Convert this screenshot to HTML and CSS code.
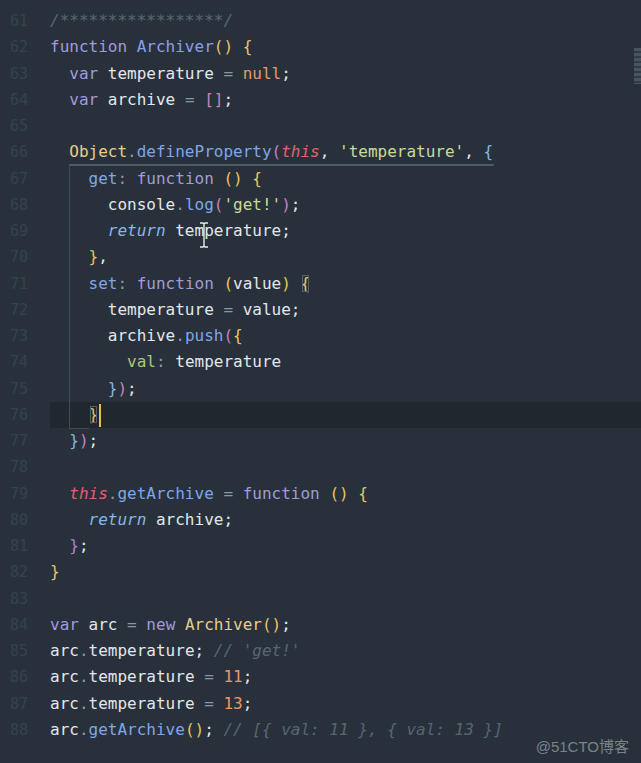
FILE: index.html
```html
<!DOCTYPE html>
<html>
<head>
<meta charset="utf-8">
<link rel="stylesheet" href="styles.css">
</head>
<body>
<div class="editor">
  <div class="row"><span class="ln">61</span><span class="code"><span class="cm">/*****************/</span></span></div>
  <div class="row"><span class="ln">62</span><span class="code"><span class="kw">function</span> <span class="fn">Archiver</span><span class="y">()</span> <span class="y">{</span></span></div>
  <div class="row"><span class="ln">63</span><span class="code">  <span class="kw">var</span> temperature <span class="op">=</span> <span class="nu">null</span>;</span></div>
  <div class="row"><span class="ln">64</span><span class="code">  <span class="kw">var</span> archive <span class="op">=</span> <span class="pk">[]</span>;</span></div>
  <div class="row"><span class="ln">65</span><span class="code"></span></div>
  <div class="row"><span class="ln">66</span><span class="code">  <span class="ob">Object</span><span class="op">.</span><span class="me">defineProperty</span><span class="pk">(</span><span class="th">this</span>, <span class="st">'temperature'</span>, <span class="lb">{</span></span></div>
  <div class="row"><span class="ln">67</span><span class="code">    <span class="me">get</span><span class="op">:</span> <span class="kw">function</span> <span class="y">()</span> <span class="y">{</span></span></div>
  <div class="row"><span class="ln">68</span><span class="code">      console<span class="op">.</span><span class="me">log</span><span class="pk">(</span><span class="st">'get!'</span><span class="pk">)</span>;</span></div>
  <div class="row"><span class="ln">69</span><span class="code">      <span class="rt">return</span> temperature;</span></div>
  <div class="row"><span class="ln">70</span><span class="code">    <span class="y">}</span>,</span></div>
  <div class="row"><span class="ln">71</span><span class="code">    <span class="me">set</span><span class="op">:</span> <span class="kw">function</span> <span class="y">(</span>value<span class="y">)</span> <span class="y boxed">{</span></span></div>
  <div class="row"><span class="ln">72</span><span class="code">      temperature <span class="op">=</span> value;</span></div>
  <div class="row"><span class="ln">73</span><span class="code">      archive<span class="op">.</span><span class="me">push</span><span class="pk">(</span><span class="y">{</span></span></div>
  <div class="row"><span class="ln">74</span><span class="code">        <span class="gr">val</span><span class="op">:</span> temperature</span></div>
  <div class="row"><span class="ln">75</span><span class="code">      <span class="lb">}</span><span class="pk">)</span>;</span></div>
  <div class="row cur"><span class="ln">76</span><span class="code">    <span class="y boxed">}</span><span class="caret"></span></span></div>
  <div class="row"><span class="ln">77</span><span class="code">  <span class="lb">}</span><span class="pk">)</span>;</span></div>
  <div class="row"><span class="ln">78</span><span class="code"></span></div>
  <div class="row"><span class="ln">79</span><span class="code">  <span class="th">this</span><span class="op">.</span><span class="me">getArchive</span> <span class="op">=</span> <span class="kw">function</span> <span class="y">()</span> <span class="y">{</span></span></div>
  <div class="row"><span class="ln">80</span><span class="code">    <span class="rt">return</span> archive;</span></div>
  <div class="row"><span class="ln">81</span><span class="code">  <span class="pu">}</span>;</span></div>
  <div class="row"><span class="ln">82</span><span class="code"><span class="y">}</span></span></div>
  <div class="row"><span class="ln">83</span><span class="code"></span></div>
  <div class="row"><span class="ln">84</span><span class="code"><span class="kw">var</span> arc <span class="op">=</span> <span class="kw">new</span> <span class="ob">Archiver</span><span class="y">()</span>;</span></div>
  <div class="row"><span class="ln">85</span><span class="code">arc<span class="op">.</span>temperature; <span class="cm">// 'get!'</span></span></div>
  <div class="row"><span class="ln">86</span><span class="code">arc<span class="op">.</span>temperature <span class="op">=</span> <span class="nu">11</span>;</span></div>
  <div class="row"><span class="ln">87</span><span class="code">arc<span class="op">.</span>temperature <span class="op">=</span> <span class="nu">13</span>;</span></div>
  <div class="row"><span class="ln">88</span><span class="code">arc<span class="op">.</span><span class="me">getArchive</span><span class="y">()</span>; <span class="cm">// [{ val: 11 }, { val: 13 }]</span></span></div>

  <div class="guide"><div class="guide-foot"></div></div>
  <svg class="ibeam" width="10" height="26" viewBox="0 0 10 26"><path d="M1 1h3l1 1 1-1h3M5 2v22M1 25h3l1-1 1 1h3" fill="none" stroke="#e8ecef" stroke-width="1.4"/></svg>
  <div class="scrollmarks"></div>
</div>
<div class="watermark">@51CTO博客</div>
</body>
</html>
```
FILE: styles.css
```css
html, body {
  margin: 0;
  padding: 0;
  background: #28313b;
}
body {
  width: 641px;
  height: 763px;
  overflow: hidden;
  position: relative;
}
.editor {
  position: relative;
  padding-top: 8px;
  font-family: "DejaVu Sans Mono", monospace;
  font-size: 16px;
  color: #e3e6ea;
}
.row {
  display: flex;
  height: 26.25px;
  line-height: 26.25px;
}
.ln {
  width: 50px;
  flex: none;
  box-sizing: border-box;
  padding-left: 10px;
  color: #37414b;
  font-size: 15px;
}
.code {
  flex: 1;
  white-space: pre;
  position: relative;
}
.row.cur .code {
  background: #20272e;
}
.kw { color: #a19bda; }
.fn { color: #8b9eec; }
.y { color: #e7c45e; }
.op { color: #8996a3; }
.nu { color: #e49a6a; }
.pk { color: #c97fbe; }
.ob { color: #ebca8c; }
.me { color: #7ea6ea; }
.th { color: #e3606d; font-style: italic; }
.st { color: #c8db9a; }
.lb { color: #80b6e2; }
.gr { color: #a9c87a; }
.pu { color: #b481d4; }
.rt { color: #86b6ec; font-style: italic; }
.cm { color: #596572; font-style: italic; }
.boxed {
  outline: 1px solid #56606a;
  outline-offset: -2px;
}
.caret {
  display: inline-block;
  width: 2px;
  height: 23px;
  background: #e7c24a;
  vertical-align: middle;
  margin-left: 1px;
}
.guide {
  position: absolute;
  left: 69px;
  top: 164px;
  width: 424px;
  height: 263px;
  border-top: 2px solid #4e5a66;
  border-left: 1px solid #434d58;
}
.guide-foot {
  position: absolute;
  left: 0;
  bottom: 0;
  width: 19px;
  border-bottom: 1px solid #434d58;
}
.ibeam {
  position: absolute;
  left: 199px;
  top: 222px;
}
.scrollmarks {
  position: absolute;
  right: 0;
  top: 48px;
  width: 7px;
  height: 36px;
  background: repeating-linear-gradient(#58626c 0 3px, #36404a 3px 5px);
  opacity: 0.7;
}
.watermark {
  position: absolute;
  right: 12px;
  bottom: 7px;
  font-family: "Liberation Sans", "Noto Sans CJK SC", sans-serif;
  font-size: 15px;
  color: #7a8188;
}
```
